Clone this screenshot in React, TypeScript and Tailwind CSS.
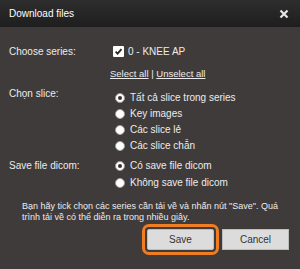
import React from "react";

function Radio({ checked }: { checked?: boolean }) {
  return (
    <span className="inline-flex h-[10px] w-[10px] shrink-0 items-center justify-center rounded-full border border-[#9a9a9a] bg-white">
      {checked && <span className="h-[4px] w-[4px] rounded-full bg-[#333]" />}
    </span>
  );
}

function CheckBox() {
  return (
    <span className="inline-flex h-[11px] w-[11px] shrink-0 items-center justify-center rounded-[1px] bg-white">
      <svg width="9" height="9" viewBox="0 0 10 10">
        <path d="M1.8 5.2 L4 7.4 L8.3 2.4" fill="none" stroke="#222" strokeWidth="1.9" />
      </svg>
    </span>
  );
}

export default function App() {
  const slices = [
    { label: "Tất cả slice trong series", checked: true },
    { label: "Key images" },
    { label: "Các slice lẻ" },
    { label: "Các slice chẵn" },
  ];
  const saveOpts = [
    { label: "Có save file dicom", checked: true },
    { label: "Không save file dicom" },
  ];

  return (
    <div
      className="flex h-[269px] w-[300px] flex-col bg-[#3f3b3a] text-[10px] text-[#ececec]"
      style={{ fontFamily: '"Liberation Sans", Arial, sans-serif' }}
    >
      {/* Header */}
      <div className="flex h-[27px] items-center justify-between bg-gradient-to-b from-[#2e2e2e] to-[#1e1e1e] pl-[9px] pr-[11px]">
        <span className="text-[10px] text-white">Download files</span>
        <svg width="10" height="10" viewBox="0 0 10 10">
          <path d="M1.5 1.5 L8.5 8.5 M8.5 1.5 L1.5 8.5" stroke="#e6e6e6" strokeWidth="2.2" />
        </svg>
      </div>

      <div className="flex flex-col pl-[9px] pt-[17px]">
        {/* Choose series */}
        <div className="flex">
          <span className="w-[104px]">Choose series:</span>
          <div className="flex items-center gap-[4px]">
            <CheckBox />
            <span>0 - KNEE AP</span>
          </div>
        </div>
        <div className="mt-[8px] pl-[101px] text-[9.5px]">
          <span className="underline">Select all</span>
          <span> | </span>
          <span className="underline">Unselect all</span>
        </div>

        {/* Chọn slice */}
        <div className="mt-[5px] flex">
          <span className="w-[106px]">Chọn slice:</span>
          <div className="flex flex-col gap-[3px] pt-[5px]">
            {slices.map((s) => (
              <div key={s.label} className="flex h-[13px] items-center gap-[5px]">
                <Radio checked={s.checked} />
                <span>{s.label}</span>
              </div>
            ))}
          </div>
        </div>

        {/* Save file dicom */}
        <div className="mt-[4px] flex">
          <span className="w-[106px] pt-[2px]">Save file dicom:</span>
          <div className="flex flex-col gap-[4px] pt-[3px]">
            {saveOpts.map((s) => (
              <div key={s.label} className="flex h-[13px] items-center gap-[5px]">
                <Radio checked={s.checked} />
                <span>{s.label}</span>
              </div>
            ))}
          </div>
        </div>
      </div>

      {/* Info */}
      <p className="mt-[12px] pl-[22px] pr-[20px] text-[9px] leading-[11px]">
        Bạn hãy tick chọn các series cần tải về và nhấn nút "Save". Quá trình tải về có thể diễn ra trong nhiều giây.
      </p>

      {/* Buttons */}
      <div className="mt-[6px] flex justify-end gap-[8px] pr-[11px]">
        <button className="h-[21px] w-[67px] rounded-[2px] border border-[#bdbdbd] bg-[#dcdcdc] text-[10px] text-[#333] outline outline-[3px] outline-offset-[2px] outline-[#ef7d22]">
          Save
        </button>
        <button className="h-[21px] w-[67px] border border-[#bdbdbd] bg-[#dcdcdc] text-[10px] text-[#333]">
          Cancel
        </button>
      </div>
    </div>
  );
}
